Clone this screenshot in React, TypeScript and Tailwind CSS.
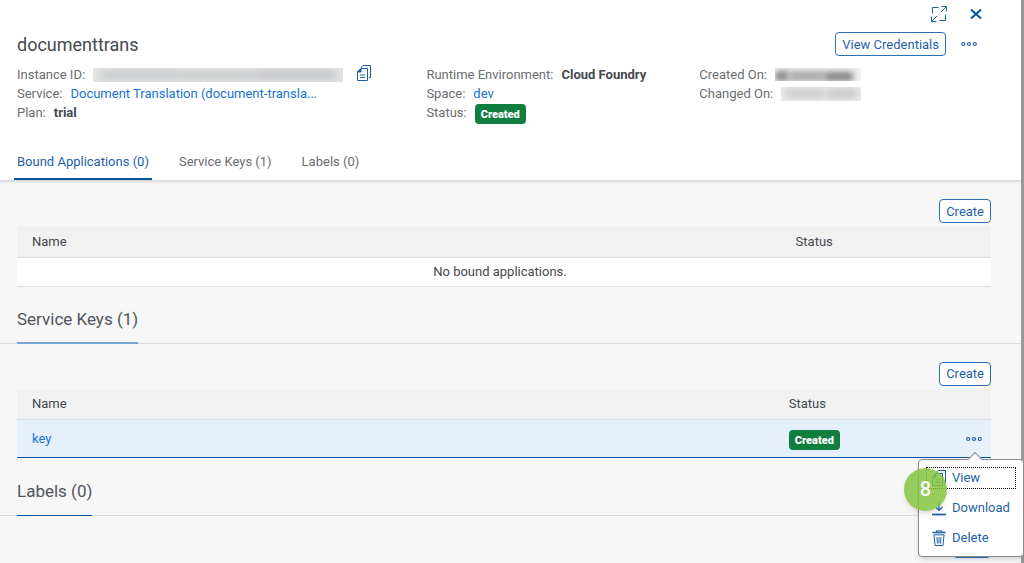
import React from 'react';

const CopyIcon = () => (
  <svg className="w-[14px] h-[16px]" viewBox="0 0 14 16" fill="none" stroke="currentColor" strokeWidth="1">
    <path d="M4.5 3V2L6 .5h7.5v12H12" />
    <path d="M.5 7l3.5-3.5h6.5v12H.5z" />
    <path d="M.5 7l3.5-3.5v3.5z" fill="currentColor" />
    <path d="M3 10h5M3 12.5h5" strokeWidth="1.2" />
  </svg>
);

const DownloadIcon = () => (
  <svg className="w-[14px] h-[16px]" viewBox="0 0 14 16" fill="none" stroke="currentColor" strokeWidth="1.2">
    <path d="M7 1v9.5M3.5 7L7 10.5 10.5 7" />
    <path d="M0 14.5h14" strokeWidth="1.8" />
  </svg>
);

const TrashIcon = () => (
  <svg className="w-[14px] h-[16px]" viewBox="0 0 14 16" fill="none" stroke="currentColor" strokeWidth="1">
    <path d="M4.5 2V.8h5V2" />
    <path d="M.5 2.5h13" strokeWidth="1.6" />
    <path d="M1.5 4.8h11M2 5l1 10.5h8L12 5" />
    <path d="M5 7l.4 6.5M7 7v6.5M9 7l-.4 6.5" />
  </svg>
);

const ExpandIcon = () => (
  <svg className="w-4 h-4" viewBox="0 0 16 16" fill="none" stroke="currentColor" strokeWidth="1">
    <path d="M10.5 .5h5v5M15 1l-5 5" />
    <path d="M5.5 15.5h-5v-5M1 15l5-5" />
    <path d="M7.5 1.5h-6v6M8.5 14.5h6v-6" />
  </svg>
);

const CloseIcon = () => (
  <svg className="w-[12px] h-[12px]" viewBox="0 0 12 12" fill="none" stroke="currentColor" strokeWidth="2">
    <path d="M1 1.5l10 9M11 1.5l-10 9" />
  </svg>
);

const MoreIcon = () => (
  <svg className="w-4 h-[6px]" viewBox="0 0 16 6" fill="none" stroke="currentColor" strokeWidth="1.2">
    <circle cx="2.2" cy="3" r="1.5" />
    <circle cx="8" cy="3" r="1.5" />
    <circle cx="13.8" cy="3" r="1.5" />
  </svg>
);

const tabs = ['Bound Applications (0)', 'Service Keys (1)', 'Labels (0)'];

const menuItems = [
  { icon: CopyIcon, label: 'View' },
  { icon: DownloadIcon, label: 'Download' },
  { icon: TrashIcon, label: 'Delete' },
];

const OutlineButton = ({ children }: { children: React.ReactNode }) => (
  <button className="h-6 px-[6px] rounded border border-[#2a6fb5] bg-white text-[#1f5fa8] whitespace-nowrap leading-none">
    {children}
  </button>
);

const StatusBadge = () => (
  <span className="inline-flex items-center h-5 px-[6px] pt-px rounded bg-[#107e3e] text-white text-[11px] leading-none font-black">
    Created
  </span>
);

const SectionTitle = ({ children, line }: { children: React.ReactNode; line: string }) => (
  <div className="border-b border-[#dcdcdc] px-[17px] flex">
    <h2 className={`text-[17px] leading-6 text-[#51555a] -mb-px ${line}`}>{children}</h2>
  </div>
);

const Field = ({ label, children }: { label: string; children: React.ReactNode }) => (
  <div className="flex h-[19px] items-center gap-2 whitespace-nowrap">
    <dt className="text-[#6a6d70]">{label}</dt>
    <dd className="flex items-center">{children}</dd>
  </div>
);

const RowMenu = () => (
  <div className="absolute z-10 top-[23px] -right-[42px] w-[106px] rounded border border-[#8a8c8e] bg-white shadow-md p-[7px]">
    <div className="absolute -top-[6px] left-[51px] w-[10px] h-[10px] rotate-45 border-l border-t border-[#8a8c8e] bg-white" />
    <div className="flex flex-col gap-2">
      {menuItems.map((item, index) => (
        <button
          key={item.label}
          className={`flex items-center gap-[6px] h-[22px] pl-[5px] text-[#1f5fa8] border ${
            index === 0 ? 'border-dotted border-black' : 'border-transparent'
          }`}
        >
          <item.icon />
          {item.label}
        </button>
      ))}
    </div>
    <div className="absolute top-[8px] -left-[15px] w-[43px] h-[43px] rounded-full bg-[#84c440]/85 shadow-md flex items-center justify-center text-white text-xl font-medium">
      8
    </div>
  </div>
);

const App = () => {
  return (
    <div className="flex h-screen overflow-hidden bg-[#f7f7f7] font-['Roboto','Liberation_Sans',sans-serif] text-[13px] text-[#45494d]">
      <div className="flex-1 min-w-0">
        <header className="relative bg-white border-b border-[#d9d9d9] shadow-sm pt-[6px]">
          <div className="flex justify-end gap-[23px] pr-[39px] h-4 items-center text-[#1f5fa8]">
            <button aria-label="Full screen"><ExpandIcon /></button>
            <button aria-label="Close" className="text-[#0854a0]"><CloseIcon /></button>
          </div>
          <div className="flex items-center justify-between mt-[10px] h-6 pl-[17px] pr-[44px]">
            <h1 className="text-[18px]">documenttrans</h1>
            <div className="flex items-center gap-[15px] text-[#1f5fa8]">
              <OutlineButton>View Credentials</OutlineButton>
              <button aria-label="More actions"><MoreIcon /></button>
            </div>
          </div>

          <div className="grid grid-cols-[42fr_28fr_33fr] mt-[9px] pl-[17px]">
            <dl>
              <Field label="Instance ID:">
                <span className="w-[250px] h-[14px] bg-[#e4e5e5] flex items-center justify-center overflow-hidden">
                  <span className="w-[78px] h-[8px] bg-[#c2c4c6] blur-[4px]" />
                  <span className="w-[78px] h-[8px] bg-[#c6c8ca] blur-[4px]" />
                  <span className="w-[78px] h-[8px] bg-[#bcbec1] blur-[4px]" />
                </span>
                <button aria-label="Copy instance ID" className="ml-[14px] -mt-1 text-[#1f5fa8]"><CopyIcon /></button>
              </Field>
              <Field label="Service:">
                <a href="#service" className="text-[#1673d6]">Document Translation (document-transla...</a>
              </Field>
              <Field label="Plan:"><b>trial</b></Field>
            </dl>
            <dl>
              <Field label="Runtime Environment:"><b>Cloud Foundry</b></Field>
              <Field label="Space:"><a href="#space" className="text-[#1673d6]">dev</a></Field>
              <Field label="Status:"><span className="flex pt-[3px]"><StatusBadge /></span></Field>
            </dl>
            <dl>
              <Field label="Created On:">
                <span className="w-[86px] h-[13px] bg-[#f0f0f0] flex items-end overflow-hidden">
                  <span className="w-[14px] h-[10px] bg-[#888888] blur-[3px]" />
                  <span className="w-[36px] h-[10px] bg-[#a8a8a8] blur-[3px]" />
                  <span className="w-[28px] h-[9px] bg-[#808080] blur-[3px]" />
                </span>
              </Field>
              <Field label="Changed On:">
                <span className="w-[80px] h-[14px] bg-[#ebebeb] flex items-center justify-center gap-[3px] overflow-hidden">
                  <span className="w-[38px] h-[9px] bg-[#c8c8c8] blur-[4px]" />
                  <span className="w-[30px] h-[9px] bg-[#c4c4c4] blur-[4px]" />
                </span>
              </Field>
            </dl>
          </div>

          <nav className="flex gap-6 pl-[14px] mt-[30px]">
            {tabs.map((tab, index) => (
              <button
                key={tab}
                className={`h-7 px-[3px] pb-[6px] border-b-2 ${
                  index === 0 ? 'border-[#0854a0] text-[#1f5fa8]' : 'border-transparent text-[#6a6d70]'
                }`}
              >
                {tab}
              </button>
            ))}
          </nav>
        </header>

        <main>
          <section className="pl-[17px] pr-[30px] pt-[18px]">
            <div className="flex justify-end mb-[3px]">
              <OutlineButton>Create</OutlineButton>
            </div>
            <table className="w-full table-fixed text-left">
              <thead>
                <tr className="h-[31px] bg-[#f1f1f1] border-b border-[#dcdcdc]">
                  <th className="pl-[15px] font-normal w-[78.4%]">Name</th>
                  <th className="pl-[15px] font-normal">Status</th>
                </tr>
              </thead>
              <tbody>
                <tr className="h-[29px] bg-white border-b border-[#dcdcdc]">
                  <td colSpan={2} className="text-center pr-2">No bound applications.</td>
                </tr>
              </tbody>
            </table>
          </section>

          <div className="mt-5">
            <SectionTitle line="pb-[11px] border-b-2 border-[#76a5d6]">Service Keys (1)</SectionTitle>
          </div>
          <section className="pl-[17px] pr-[30px] pt-[18px]">
            <div className="flex justify-end mb-[3px]">
              <OutlineButton>Create</OutlineButton>
            </div>
            <table className="w-full table-fixed text-left">
              <thead>
                <tr className="h-[31px] bg-[#f1f1f1] border-b border-[#dcdcdc]">
                  <th className="pl-[15px] font-normal w-[77.7%]">Name</th>
                  <th className="pl-[15px] font-normal">Status</th>
                  <th className="w-[50px]" aria-label="Actions" />
                </tr>
              </thead>
              <tbody>
                <tr className="h-[38px] bg-[#e5f0fa] border-b border-[#0854a0]">
                  <td className="pl-[15px]"><a href="#key" className="text-[#1673d6]">key</a></td>
                  <td className="pl-[15px]"><span className="flex pt-[2px]"><StatusBadge /></span></td>
                  <td className="pr-[9px]">
                    <div className="relative flex justify-end">
                      <button aria-label="Key actions" className="text-[#1f5fa8]"><MoreIcon /></button>
                      <RowMenu />
                    </div>
                  </td>
                </tr>
              </tbody>
            </table>
          </section>

          <div className="mt-[21px]">
            <SectionTitle line="pb-3 border-b border-[#0854a0]">Labels (0)</SectionTitle>
          </div>
          <section className="pl-[17px] pr-[30px] pt-[18px] flex justify-end">
            <button aria-label="Edit labels" className="h-6 w-[38px] rounded border border-[#2a6fb5] bg-white" />
          </section>
        </main>
      </div>
      <div className="w-[3px] bg-[#999999]" />
    </div>
  );
};

export default App;
